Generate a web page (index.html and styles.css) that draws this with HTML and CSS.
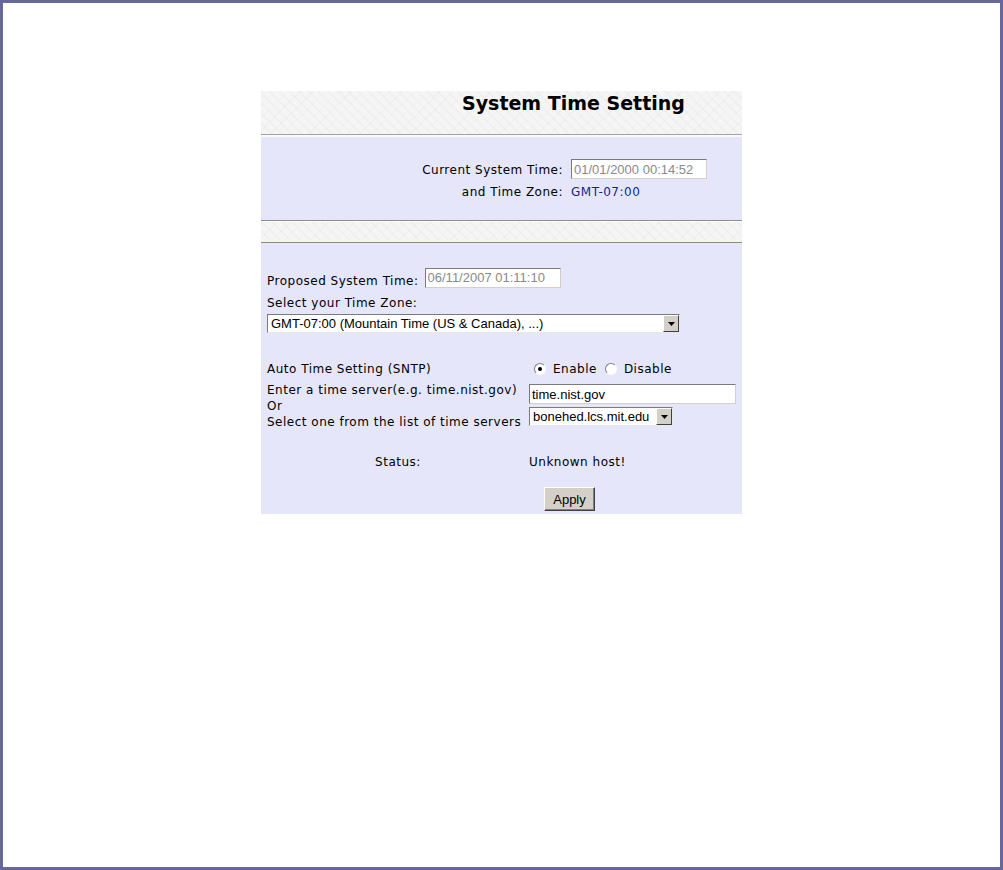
FILE: index.html
```html
<!DOCTYPE html>
<html>
<head>
  <title>System Time Setting</title>
  <link rel="stylesheet" href="styles.css">
</head>
<body>
  <div class="frame">
    <div class="panel">
      <div class="title-bar">
        <h1>System Time Setting</h1>
      </div>

      <div class="current">
        <div class="current-grid">
          <span class="label">Current System Time:</span>
          <input class="field field-time" type="text" value="01/01/2000 00:14:52" disabled>
          <span class="label">and Time Zone:</span>
          <span class="zone">GMT-07:00</span>
        </div>
      </div>

      <div class="divider"></div>

      <form class="settings">
        <div class="proposed">
          <span>Proposed System Time:</span>
          <input class="field field-time" type="text" value="06/11/2007 01:11:10" disabled>
        </div>
        <div class="zone-label">Select your Time Zone:</div>
        <div class="dropdown dropdown-zone">
          <select>
            <option>GMT-07:00 (Mountain Time (US &amp; Canada), ...)</option>
          </select>
          <span class="arrow"><svg width="7" height="4" viewBox="0 0 7 4"><path d="M0 0h7L3.5 4z" fill="#000"/></svg></span>
        </div>

        <div class="row sntp">
          <div class="col-left">Auto Time Setting (SNTP)</div>
          <div class="col-right radios">
            <label><span class="radio checked"></span>Enable</label>
            <label><span class="radio"></span>Disable</label>
          </div>
        </div>

        <div class="row server">
          <div class="col-left">
            <div>Enter a time server(e.g. time.nist.gov)</div>
            <div>Or</div>
            <div>Select one from the list of time servers</div>
          </div>
          <div class="col-right server-inputs">
            <input class="field field-server" type="text" value="time.nist.gov">
            <div class="dropdown dropdown-server">
              <select>
                <option>bonehed.lcs.mit.edu</option>
              </select>
              <span class="arrow"><svg width="7" height="4" viewBox="0 0 7 4"><path d="M0 0h7L3.5 4z" fill="#000"/></svg></span>
            </div>
          </div>
        </div>

        <div class="row status">
          <div class="col-left status-label">Status:</div>
          <div class="col-right">Unknown host!</div>
        </div>

        <div class="actions">
          <button type="button">Apply</button>
        </div>
      </form>
    </div>
  </div>
</body>
</html>
```

FILE: styles.css
```css
html, body {
  margin: 0;
  padding: 0;
  background: #fff;
}
.frame {
  box-sizing: border-box;
  width: 1003px;
  height: 870px;
  border: 3px solid #67679b;
  padding: 88px 0 0 258px;
  font-family: "DejaVu Sans", Verdana, sans-serif;
  font-size: 12px;
  letter-spacing: 0.5px;
  color: #000;
}
.panel {
  width: 481px;
  background: #e6e6fa;
}
.title-bar {
  height: 43px;
  border-bottom: 1px solid #a3a3a3;
  box-shadow: 0 2px 0 #fafafa;
  margin-bottom: 2px;
  background-color: #f5f5f5;
  background-image:
    repeating-linear-gradient(45deg, rgba(0,0,0,0.02) 0 2px, transparent 2px 7px),
    repeating-linear-gradient(-45deg, rgba(0,0,0,0.02) 0 1px, transparent 1px 9px);
}
.title-bar h1 {
  margin: 0;
  padding: 0 0 0 201px;
  font-size: 19px;
  font-weight: bold;
  line-height: 24px;
  letter-spacing: 0;
}
.current {
  height: 81px;
  padding-top: 22px;
  box-sizing: border-box;
}
.current-grid {
  display: grid;
  grid-template-columns: 302px auto;
  column-gap: 8px;
  row-gap: 5px;
  align-items: center;
  line-height: 16px;
}
.current-grid .label:first-child {
  padding-top: 1px;
}
.label {
  text-align: right;
}
.zone {
  color: #1c1c96;
}
.field {
  box-sizing: border-box;
  height: 20px;
  padding: 0 2px;
  border: 1px solid;
  border-color: #7a7a7a #d4d0c8 #d4d0c8 #7a7a7a;
  background: #fff;
  font-family: "Liberation Sans", Arial, sans-serif;
  font-size: 13px;
  letter-spacing: 0;
  color: #000;
  margin: 0;
}
.field:disabled {
  color: #8a8a8a;
}
.field-time {
  width: 136px;
}
.divider {
  height: 21px;
  border-top: 1px solid #8c8c8c;
  border-bottom: 1px solid #8c8c8c;
  box-shadow: inset 0 1px 0 #fff, inset 0 -2px 0 #f6f6e6;
  background-color: #f5f5f5;
  background-image:
    repeating-linear-gradient(45deg, rgba(0,0,0,0.02) 0 2px, transparent 2px 7px),
    repeating-linear-gradient(-45deg, rgba(0,0,0,0.02) 0 1px, transparent 1px 9px);
  margin-top: 2px;
  margin-bottom: 1px;
}
.settings {
  margin: 0;
  padding: 22px 6px 3px 6px;
}
.proposed {
  display: flex;
  align-items: center;
  gap: 6px;
}
.proposed span {
  padding-top: 7px;
  line-height: 16px;
}
.zone-label {
  margin-top: 6px;
  line-height: 16px;
}
.dropdown {
  display: flex;
  box-sizing: border-box;
  height: 19px;
  border: 1px solid;
  border-color: #7a7a7a #e8e8e8 #e8e8e8 #7a7a7a;
  background: #fff;
}
.dropdown select {
  flex: 1;
  min-width: 0;
  appearance: none;
  -webkit-appearance: none;
  border: none;
  outline: none;
  background: transparent;
  padding: 0 0 0 3px;
  margin: 0;
  font-family: "Liberation Sans", Arial, sans-serif;
  font-size: 13px;
  letter-spacing: 0;
  color: #000;
}
.arrow {
  box-sizing: border-box;
  width: 16px;
  display: flex;
  align-items: center;
  justify-content: center;
  background: #d4d0c8;
  border: 1px solid;
  border-color: #fff #404040 #404040 #fff;
}
.dropdown-zone {
  width: 413px;
  margin-top: 3px;
}
.row {
  display: flex;
}
.col-left {
  width: 262px;
  line-height: 16px;
}
.sntp {
  margin-top: 28px;
}
.radios {
  display: flex;
  gap: 8px;
  padding-left: 5px;
  line-height: 16px;
}
.radios label {
  display: flex;
  align-items: center;
  gap: 7px;
}
.radio {
  box-sizing: border-box;
  width: 12px;
  height: 12px;
  border-radius: 50%;
  background: #fff;
  border: 1px solid;
  border-color: #808080 #fff #fff #808080;
  display: flex;
  align-items: center;
  justify-content: center;
}
.radio.checked::after {
  content: "";
  width: 4px;
  height: 4px;
  border-radius: 50%;
  background: #000;
}
.server {
  margin-top: 5px;
}
.server-inputs {
  display: flex;
  flex-direction: column;
  gap: 3px;
  padding-top: 2px;
}
.field-server {
  width: 207px;
}
.dropdown-server {
  width: 144px;
}
.status {
  margin-top: 24px;
  line-height: 16px;
}
.status-label {
  text-align: center;
}
.actions {
  margin: 17px 0 0 277px;
}
.actions button {
  box-sizing: border-box;
  width: 51px;
  height: 24px;
  padding: 0;
  background: #d4d0c8;
  border: 1px solid;
  border-color: #fff #404040 #404040 #fff;
  box-shadow: inset -1px -1px 0 #808080;
  font-family: "Liberation Sans", Arial, sans-serif;
  font-size: 13px;
  color: #000;
}
```
